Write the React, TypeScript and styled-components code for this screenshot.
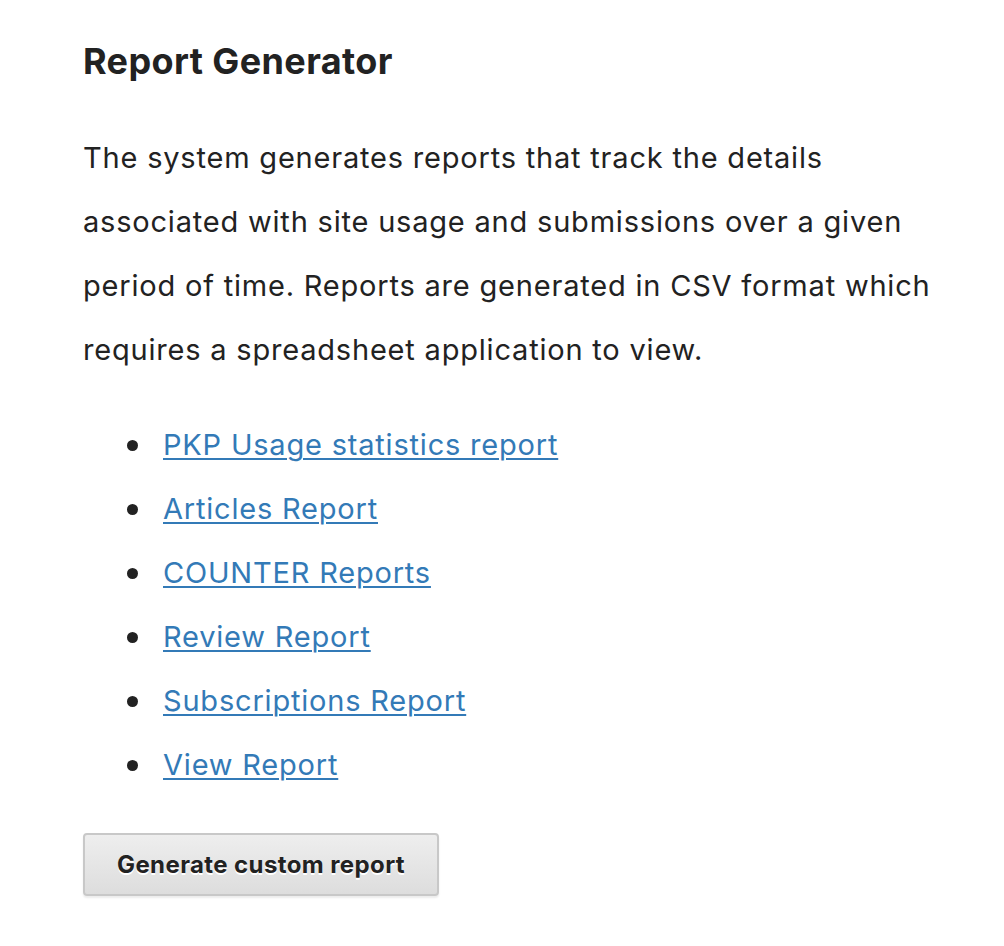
import React from 'react';
import styled, { createGlobalStyle } from 'styled-components';

const GlobalStyle = createGlobalStyle`
  body {
    margin: 0;
    background: #ffffff;
    font-family: Inter, "Noto Sans", "Liberation Sans", sans-serif;
    color: #222222;
  }
`;

const Page = styled.div`
  padding: 36px 60px 40px 83px;
  width: 1004px;
  box-sizing: border-box;
`;

const Title = styled.h2`
  margin: 0;
  font-size: 36px;
  line-height: 50px;
  font-weight: 700;
  letter-spacing: 0.4px;
  color: #222222;
`;

const Intro = styled.p`
  margin: 40px 0 0;
  font-size: 29px;
  line-height: 64px;
  letter-spacing: 0.8px;
  color: #222222;
  max-width: 860px;
`;

const LinkList = styled.ul`
  margin: 31px 0 0;
  padding-left: 44px;
  list-style: none;
  font-size: 29px;
  line-height: 64px;
  letter-spacing: 0.8px;
`;

const LinkItem = styled.li`
  display: flex;
  align-items: center;
  gap: 25px;
  height: 64px;
`;

const Dot = styled.span`
  width: 11px;
  height: 11px;
  border-radius: 50%;
  background: #222222;
  flex: none;
`;

const ReportLink = styled.a`
  color: #337ab7;
  text-decoration: underline;
  text-decoration-thickness: 2px;
  text-underline-offset: 3px;
`;

const Button = styled.button`
  margin-top: 36px;
  height: 63px;
  padding: 0 32px;
  font-family: Inter, "Noto Sans", "Liberation Sans", sans-serif;
  font-size: 24px;
  font-weight: 700;
  letter-spacing: 0.4px;
  color: #222222;
  text-shadow: 0 2px 0 #ffffff;
  background: linear-gradient(#eeeeee, #dddddd);
  border: 2px solid #c8c8c8;
  border-radius: 4px;
  box-shadow: 0 2px 2px rgba(0, 0, 0, 0.08);
  cursor: pointer;
`;

const reports = [
  'PKP Usage statistics report',
  'Articles Report',
  'COUNTER Reports',
  'Review Report',
  'Subscriptions Report',
  'View Report',
];

export default function App() {
  return (
    <Page>
      <GlobalStyle />
      <Title>Report Generator</Title>
      <Intro>
        The system generates reports that track the details associated with site usage and
        submissions over a given period of time. Reports are generated in CSV format which
        requires a spreadsheet application to view.
      </Intro>
      <LinkList>
        {reports.map((r) => (
          <LinkItem key={r}>
            <Dot />
            <ReportLink href="#">{r}</ReportLink>
          </LinkItem>
        ))}
      </LinkList>
      <Button>Generate custom report</Button>
    </Page>
  );
}
